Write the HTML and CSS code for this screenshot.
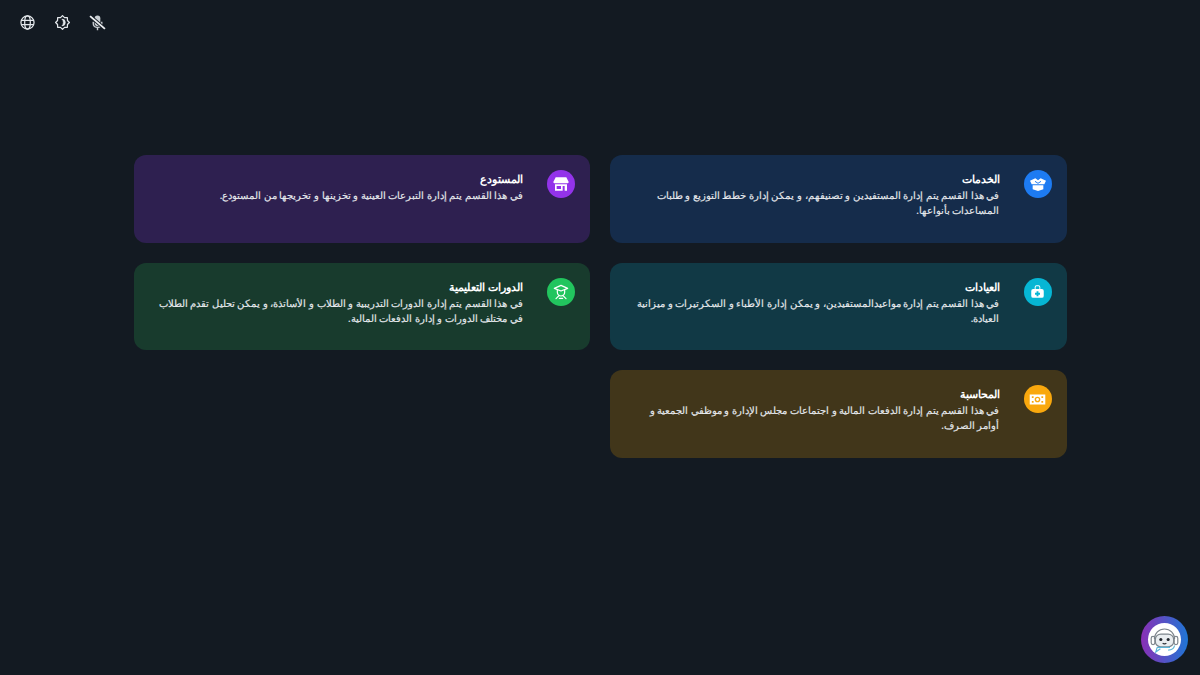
FILE: index.html
```html
<!DOCTYPE html>
<html lang="ar" dir="rtl">
<head>
  <meta charset="UTF-8">
  <meta name="viewport" content="width=device-width, initial-scale=1.0">
  <title>الأقسام</title>
  <link rel="stylesheet" href="styles.css">
</head>
<body>
  <div class="toolbar" dir="ltr">
    <button class="tool-btn" aria-label="language">
      <svg viewBox="0 0 24 24" width="15" height="15" fill="none" stroke="#e4e8ec" stroke-width="2">
        <circle cx="12" cy="12" r="10.500"/>
        <ellipse cx="12" cy="12" rx="4.500" ry="10.500"/>
        <path d="M2 8.500h20M2 15.500h20"/>
      </svg>
    </button>
    <button class="tool-btn" aria-label="theme">
      <svg viewBox="0 0 24 24" width="15" height="15" fill="none" stroke="#e4e8ec" stroke-width="2" stroke-linejoin="round">
        <path d="M12 1l3.200 3.200 4.600.1.100 4.500L23 12l-3.100 3.200-.1 4.500-4.600.1L12 23l-3.200-3.200-4.600-.1-.1-4.500L1 12l3.100-3.200.1-4.500 4.600-.1z"/>
        <path d="M11 6.500a5.500 5.500 0 0 1 0 11 7.500 7.500 0 0 0 0-11z" fill="#e4e8ec" stroke-width="1"/>
      </svg>
    </button>
    <button class="tool-btn" aria-label="microphone off">
      <svg viewBox="0 0 24 24" width="17" height="17" fill="#c9ced3">
        <path d="M8 6a4 4 0 0 1 8 0v7a4 4 0 0 1-8 0z"/>
        <path d="M5 11h2v2a5 5 0 0 0 10 0v-2h2v2a7 7 0 0 1-6 6.900V23h-2v-3.100A7 7 0 0 1 5 13z"/>
        <path d="M1.500 3l21 18" stroke="#141b24" stroke-width="5"/>
        <path d="M1.500 3l21 18" stroke="#eef0f2" stroke-width="2.600"/>
      </svg>
    </button>
  </div>

  <main class="sections">
    <a class="card card-blue" href="#">
      <span class="card-icon">
        <svg viewBox="0 0 24 24" width="16" height="16" fill="#fff">
          <path d="M0 7l8-3.500 4 3 4-3L24 7l-2.500 5.500h-19z"/>
          <path d="M4 14h16v6l-8 2.500L4 20z"/>
          <path d="M7.500 8l4.500 3 4.500-3" fill="none" stroke="#1d7bf2" stroke-width="1.500"/>
        </svg>
      </span>
      <div class="card-text">
        <h3>الخدمات</h3>
        <p>في هذا القسم يتم إدارة المستفيدين و تصنيفهم، و يمكن إدارة خطط التوزيع و طلبات المساعدات بأنواعها.</p>
      </div>
    </a>

    <a class="card card-purple" href="#">
      <span class="card-icon">
        <svg viewBox="0 0 24 24" width="16" height="16" fill="#fff">
          <path d="M4 2h16l3.500 7a2 2 0 0 1-1.500 2H2A2 2 0 0 1 .5 9z"/>
          <path d="M3 12.500h18V22h-3.500v-7h-3V22H3zm2.500 2.500v4.500h6.500V15z" fill-rule="evenodd"/>
        </svg>
      </span>
      <div class="card-text">
        <h3>المستودع</h3>
        <p>في هذا القسم يتم إدارة التبرعات العينية و تخزينها و تخريجها من المستودع.</p>
      </div>
    </a>

    <a class="card card-teal" href="#">
      <span class="card-icon">
        <svg viewBox="0 0 24 24" width="15" height="15" fill="#fff">
          <path d="M7.500 8V5a3 3 0 0 1 3-3h3a3 3 0 0 1 3 3v3H15V5a1.500 1.500 0 0 0-1.500-1.500h-3A1.500 1.500 0 0 0 9 5v3z"/>
          <path d="M5 8h14a3 3 0 0 1 3 3v8a3 3 0 0 1-3 3H5a3 3 0 0 1-3-3v-8a3 3 0 0 1 3-3zm5.500 3.500v2.500H8v3h2.500v2.500h3V17H16v-3h-2.500v-2.500z" fill-rule="evenodd"/>
        </svg>
      </span>
      <div class="card-text">
        <h3>العيادات</h3>
        <p>في هذا القسم يتم إدارة مواعيدالمستفيدين، و يمكن إدارة الأطباء و السكرتيرات و ميزانية العيادة.</p>
      </div>
    </a>

    <a class="card card-green" href="#">
      <span class="card-icon">
        <svg viewBox="0 0 24 24" width="16" height="16" fill="none" stroke="#fff" stroke-width="1.800" stroke-linejoin="round" stroke-linecap="round">
          <path d="M12 2L2 6.500l10 4 10-4z"/>
          <path d="M6.500 9v3.500a5.500 5.500 0 0 0 11 0V9"/>
          <path d="M9 17.500L4.500 22M15 17.500l4.500 4.500M9.500 21.500h5"/>
        </svg>
      </span>
      <div class="card-text">
        <h3>الدورات التعليمية</h3>
        <p>في هذا القسم يتم إدارة الدورات التدريبية و الطلاب و الأساتذة، و يمكن تحليل تقدم الطلاب في مختلف الدورات و إدارة الدفعات المالية.</p>
      </div>
    </a>

    <a class="card card-amber" href="#">
      <span class="card-icon">
        <svg viewBox="0 0 24 24" width="17" height="17" fill="#fff">
          <path d="M1 5h22v14H1zm11 3a4 4 0 1 0 0 8 4 4 0 0 0 0-8zM4 7.500V10h2.500V7.500zm13.500 0V10H20V7.500zM4 14v2.500h2.500V14zm13.500 0v2.500H20V14z" fill-rule="evenodd"/>
          <circle cx="12" cy="12" r="2"/>
        </svg>
      </span>
      <div class="card-text">
        <h3>المحاسبة</h3>
        <p>في هذا القسم يتم إدارة الدفعات المالية و اجتماعات مجلس الإدارة و موظفي الجمعية و أوامر الصرف.</p>
      </div>
    </a>
  </main>

  <button class="bot-btn" aria-label="assistant">
    <span class="bot-face">
      <svg viewBox="0 0 36 36" width="34" height="34" fill="none" stroke="#7d858c" stroke-width="1.300">
        <path d="M7 17a11 11 0 0 1 22 0"/>
        <rect x="3.500" y="14" width="4" height="9" rx="2"/>
        <rect x="28.500" y="14" width="4" height="9" rx="2"/>
        <rect x="8" y="11.500" width="20" height="14" rx="6" fill="#e9edf0"/>
        <circle cx="14" cy="17.500" r="1.700" fill="#20262c" stroke="none"/>
        <circle cx="22" cy="17.500" r="1.700" fill="#20262c" stroke="none"/>
        <path d="M16 21.500q2 1.500 4 0" stroke="#20262c"/>
        <path d="M10 26h14M10 26l-1.500 5 5-3.500" stroke="#5bb5d8"/>
        <path d="M29 24q-1 5-7 5" stroke="#5bb5d8"/>
      </svg>
    </span>
  </button>
</body>
</html>
```

FILE: styles.css
```css
* {
  box-sizing: border-box;
}
body {
  margin: 0;
  min-height: 675px;
  overflow: hidden;
  font-family: "Noto Sans", sans-serif;
  background: #131a22;
  color: #fff;
}
.toolbar {
  display: flex;
  gap: 11px;
  padding: 10px 0 0 15px;
}
.tool-btn {
  width: 24px;
  height: 24px;
  padding: 0;
  display: flex;
  align-items: center;
  justify-content: center;
  background: none;
  border: none;
  cursor: pointer;
}
.sections {
  display: grid;
  grid-template-columns: 456.5px 456.5px;
  grid-auto-rows: 87.6px;
  gap: 20px;
  width: 933px;
  margin: 121px 133.5px 0;
}
.card {
  display: flex;
  gap: 24px;
  padding: 15px;
  border-radius: 12px;
  color: inherit;
  text-decoration: none;
}
.card-blue { background: #152c4b; }
.card-purple { background: #2e2050; }
.card-teal { background: #113945; }
.card-green { background: #183b2d; }
.card-amber { background: #41361a; }
.card-icon {
  flex: none;
  width: 28px;
  height: 28px;
  border-radius: 50%;
  display: flex;
  align-items: center;
  justify-content: center;
}
.card-blue .card-icon { background: #1d7bf2; }
.card-purple .card-icon { background: #9333ea; }
.card-teal .card-icon { background: #06b6d4; }
.card-green .card-icon { background: #22c55e; }
.card-amber .card-icon { background: #f9a80d; }
.card-text {
  flex: 1;
  min-width: 0;
  padding-left: 4px;
}
.card-text h3 {
  margin: 0;
  font-size: 11px;
  font-weight: 700;
  line-height: 18px;
  color: #fff;
}
.card-text p {
  margin: 0;
  font-size: 9.85px;
  line-height: 15px;
  color: #e6e9ed;
  -webkit-text-stroke: 0.15px #e6e9ed;
}
.bot-btn {
  position: fixed;
  right: 12px;
  bottom: 12px;
  width: 47px;
  height: 47px;
  padding: 7px;
  border: none;
  border-radius: 50%;
  background: linear-gradient(90deg, #8a2fb5, #1f76d6);
}
.bot-face {
  width: 100%;
  height: 100%;
  display: flex;
  align-items: center;
  justify-content: center;
  border-radius: 50%;
  background: #fff;
}
```
